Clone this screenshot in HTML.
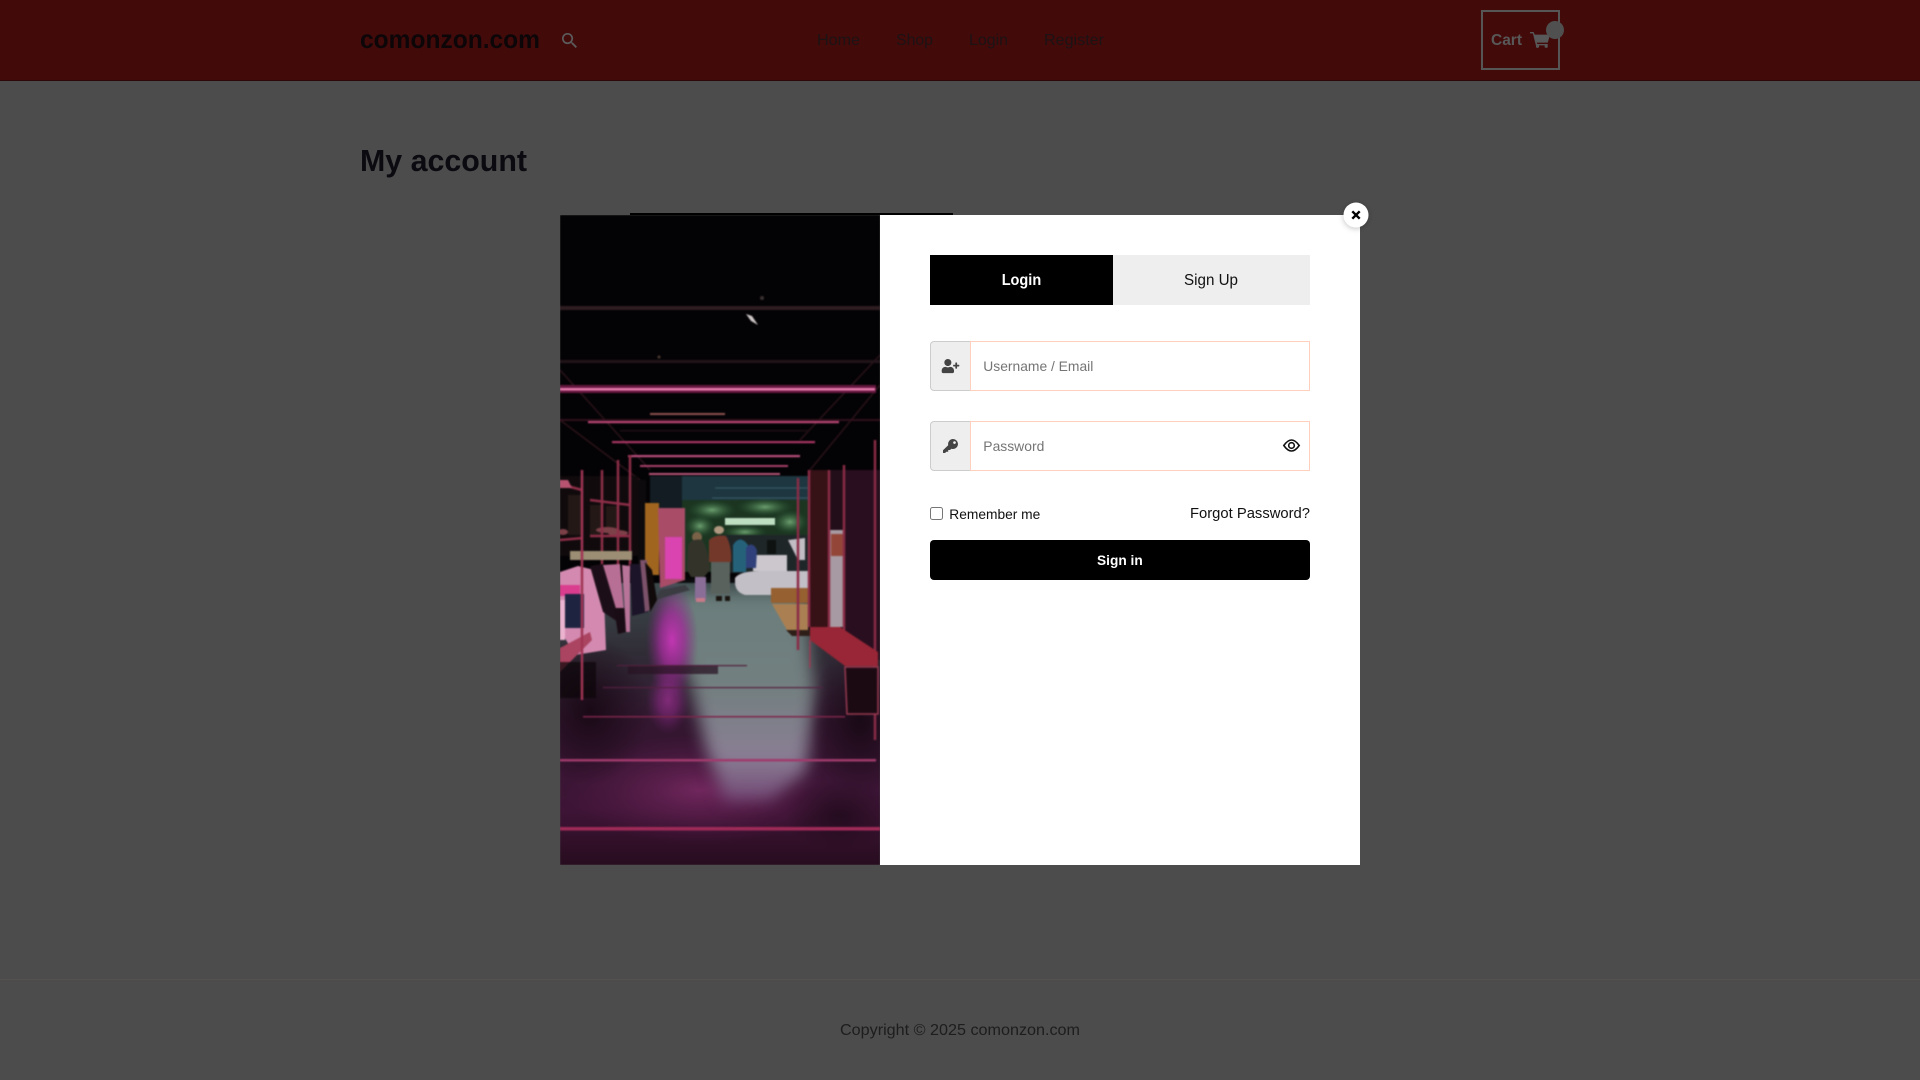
<!DOCTYPE html>
<html lang="en">
<head>
<meta charset="utf-8">
<title>My account – comonzon.com</title>
<style>
html,body{margin:0;padding:0;background:#4c4c4c;overflow:hidden}
svg{display:block;position:absolute;left:0;top:0}
text{font-family:"Liberation Sans",Arial,sans-serif;white-space:pre}
</style>
</head>
<body>
<svg width="1920" height="1080" viewBox="0 0 1920 1080" xmlns="http://www.w3.org/2000/svg">
<defs>
<filter id="all" filterUnits="userSpaceOnUse" x="500" y="160" width="440" height="760" color-interpolation-filters="sRGB"><feGaussianBlur stdDeviation=".8"/></filter>
<filter id="b6" filterUnits="userSpaceOnUse" x="500" y="500" width="440" height="420" color-interpolation-filters="sRGB"><feGaussianBlur stdDeviation="8"/></filter>
<filter id="sh" x="-50%" y="-50%" width="200%" height="200%"><feDropShadow dx="0" dy="1" stdDeviation="3" flood-color="#000" flood-opacity=".25"/></filter>
<clipPath id="imgc"><rect x="560" y="215" width="320" height="650"/></clipPath>
<linearGradient id="floor" x1="0" y1="0" x2="0" y2="1">
<stop offset="0" stop-color="#3c4a4c"/><stop offset=".25" stop-color="#302c36"/><stop offset=".5" stop-color="#331630"/><stop offset=".8" stop-color="#3e1436"/><stop offset="1" stop-color="#270c1e"/>
</linearGradient>
<linearGradient id="gl" gradientUnits="userSpaceOnUse" x1="0" y1="590" x2="0" y2="810">
<stop offset="0" stop-color="#6a7e7c"/><stop offset=".45" stop-color="#737f80"/><stop offset=".75" stop-color="#8a7f94"/><stop offset="1" stop-color="#6e3e70"/>
</linearGradient>
<radialGradient id="pink"><stop offset="0" stop-color="#c236b2"/><stop offset=".45" stop-color="#a02c98" stop-opacity=".8"/><stop offset="1" stop-color="#7a2478" stop-opacity="0"/></radialGradient>
<radialGradient id="plum"><stop offset="0" stop-color="#7a2a64" stop-opacity=".85"/><stop offset="1" stop-color="#5c1c4c" stop-opacity="0"/></radialGradient>
<radialGradient id="dark"><stop offset="0" stop-color="#180814" stop-opacity=".95"/><stop offset="1" stop-color="#180814" stop-opacity="0"/></radialGradient>
<radialGradient id="leaf"><stop offset="0" stop-color="#6da070"/><stop offset="1" stop-color="#2c5a34" stop-opacity="0"/></radialGradient>
</defs>

<!-- page -->
<rect width="1920" height="1080" fill="#4c4c4c"/>
<rect width="1920" height="80" fill="#430a0a"/>
<rect y="80" width="1920" height="1" fill="#2c0808"/>

<text x="360" y="48" font-size="26" font-weight="700" fill="#0d0608" textLength="180" lengthAdjust="spacingAndGlyphs">comonzon.com</text>
<path transform="translate(559.4 30.4) scale(.857)" fill="#5c5c5c" d="M15.5 14h-.79l-.28-.27A6.471 6.471 0 0 0 16 9.5 6.5 6.5 0 1 0 9.5 16c1.61 0 3.09-.59 4.23-1.57l.27.28v.79l5 4.99L20.49 19l-4.99-5zm-6 0C7.01 14 5 11.99 5 9.5S7.01 5 9.5 5 14 7.01 14 9.5 11.99 14 9.5 14z"/>

<g font-size="16" fill="#1c1315">
<text x="817" y="45" textLength="43" lengthAdjust="spacingAndGlyphs">Home</text>
<text x="896" y="45" textLength="37" lengthAdjust="spacingAndGlyphs">Shop</text>
<text x="969" y="45" textLength="39" lengthAdjust="spacingAndGlyphs">Login</text>
<text x="1044" y="45" textLength="60" lengthAdjust="spacingAndGlyphs">Register</text>
</g>

<rect x="1482" y="11" width="77" height="58" fill="none" stroke="#565656" stroke-width="2"/>
<text x="1491" y="45" font-size="16" font-weight="700" fill="#585858" textLength="31" lengthAdjust="spacingAndGlyphs">Cart</text>
<g fill="#585858">
<path d="M1530 32h3.6l1.1 2.6h15.3l-2.2 8h-11l.5 1.4h10.4v1.4h-11.8l-3-11.9-2.9-.1z"/>
<circle cx="1537.5" cy="46.3" r="1.6"/><circle cx="1546.2" cy="46.3" r="1.6"/>
</g>
<circle cx="1555" cy="30" r="9" fill="#505050"/>

<text x="360" y="171" font-size="31" font-weight="700" fill="#0a0a10" textLength="167" lengthAdjust="spacingAndGlyphs">My account</text>

<rect y="979" width="1920" height="1" fill="#565050"/>
<text x="840" y="1035" font-size="16" fill="#1d1d1d" textLength="240" lengthAdjust="spacingAndGlyphs">Copyright © 2025 comonzon.com</text>

<!-- modal -->
<rect x="630" y="213" width="323" height="2" fill="#000"/>
<rect x="880" y="215" width="480" height="650" fill="#fff"/>

<!-- photo -->
<g clip-path="url(#imgc)">
<g filter="url(#all)">
<rect x="560" y="215" width="320" height="650" fill="#030204"/>
<!-- ceiling frame diagonals -->
<g stroke="#2a131a" stroke-width="1.500" fill="none">
<path d="M560 370L650 470M880 355L800 440M880 385L810 470M560 420L640 480"/>
</g>
<!-- rear wall -->
<rect x="672" y="476" width="140" height="30" fill="#1d3640"/>
<g stroke="#385662" stroke-width="1.200" fill="none"><path d="M715 488H810M712 498H808"/></g>
<rect x="650" y="476" width="32" height="40" fill="#121c22"/>
<rect x="682" y="500" width="128" height="72" fill="#1b3521"/>
<ellipse cx="712" cy="510" rx="24" ry="10" fill="url(#leaf)"/>
<ellipse cx="765" cy="507" rx="28" ry="9" fill="url(#leaf)"/>
<ellipse cx="700" cy="526" rx="15" ry="11" fill="url(#leaf)"/>
<ellipse cx="790" cy="522" rx="18" ry="12" fill="url(#leaf)"/>
<ellipse cx="745" cy="532" rx="22" ry="7" fill="url(#leaf)"/>
<rect x="725" y="518" width="50" height="7" fill="#bfdfc2"/>
<rect x="720" y="535" width="90" height="38" fill="#1e2628"/>

<!-- ceiling bars -->
<rect x="560" y="306" width="320" height="4" fill="#2e1c20"/>
<rect x="560" y="360" width="320" height="3" fill="#22151a"/>
<rect x="560" y="385" width="316" height="8" fill="#661840"/>
<rect x="560" y="388" width="315" height="2.500" fill="#e67cae"/>
<rect x="650" y="413" width="75" height="2" fill="#8e5350"/>
<rect x="560" y="419" width="320" height="2" fill="#30101c"/>
<rect x="588" y="421" width="251" height="2.200" fill="#b84574"/>
<rect x="620" y="430" width="190" height="1.500" fill="#1e0e14"/>
<rect x="612" y="441" width="203" height="2.200" fill="#a83664"/>
<rect x="628" y="455" width="172" height="2.200" fill="#b84d7b"/>
<rect x="640" y="465" width="148" height="2" fill="#a8406a"/>
<rect x="649" y="473" width="131" height="2" fill="#b85578"/>
<path d="M746 314l6 2 6 9-7-4z" fill="#cfc8c8"/>
<circle cx="762" cy="298" r="2" fill="#3a3032"/>
<circle cx="659" cy="357" r="1.500" fill="#4a3a30"/>

<!-- floor -->
<rect x="560" y="583" width="320" height="282" fill="url(#floor)"/>
<ellipse cx="700" cy="790" rx="135" ry="55" fill="url(#plum)"/>
<path d="M668 592H802L815 690 806 772 770 800H725L705 745 690 680 672 640z" fill="url(#gl)" filter="url(#b6)"/>
<ellipse cx="672" cy="640" rx="26" ry="58" fill="url(#pink)"/>
<ellipse cx="668" cy="700" rx="22" ry="34" fill="url(#pink)" opacity=".55"/>
<rect x="628" y="665" width="90" height="9" fill="#2a1424" opacity=".75"/>
<ellipse cx="590" cy="710" rx="60" ry="75" fill="url(#dark)"/>
<ellipse cx="860" cy="720" rx="50" ry="75" fill="url(#dark)"/>
<ellipse cx="840" cy="815" rx="55" ry="35" fill="url(#dark)" opacity=".7"/>
<rect x="583" y="716" width="262" height="1.500" fill="#7c264a"/>
<rect x="603" y="687" width="220" height="1.200" fill="#542040"/>
<rect x="617" y="665" width="130" height="1.200" fill="#52203e"/>
<rect x="560" y="759" width="316" height="2.500" fill="#a03a6c"/>
<rect x="560" y="827" width="320" height="3.500" fill="#a02a58"/>

<!-- left wall: orange + pink panel -->
<rect x="638" y="480" width="8" height="105" fill="#0c0a0c"/>
<rect x="645" y="503" width="14" height="72" fill="#a06620"/>
<path d="M658 508H685V580L660 588z" fill="#a84c68"/>
<rect x="665" y="537" width="17" height="42" fill="#d944b0"/>
<path d="M685 585L660 590 655 600 690 590z" fill="#3a3c42"/>

<!-- shelf backs -->
<rect x="560" y="476" width="78" height="80" fill="#100a0c"/>
<g fill="#241816"><rect x="590" y="505" width="12" height="30"/><rect x="606" y="506" width="11" height="28"/><rect x="568" y="495" width="13" height="40"/></g>
<g fill="#7c4048"><ellipse cx="607" cy="530" rx="11" ry="3"/><ellipse cx="618" cy="533" rx="10" ry="3"/><ellipse cx="563" cy="532" rx="5" ry="3"/></g>
<!-- shelf frames -->
<g stroke="#8e2e48" stroke-width="2.500" fill="none">
<path d="M602 470V610"/><path d="M618 460V600"/><path d="M630 455V570"/>
<path d="M560 484L582 490M560 540L583 538M590 500L630 505M590 536L630 536"/>
</g>
<path d="M560 480h8l4 8h-12z" fill="#b85472"/>
<rect x="570" y="551" width="62" height="9" fill="#9c8e74"/>

<!-- clothes -->
<path d="M560 572L578 566 603 572 606 650 575 655 560 630z" fill="#d48ab0"/>
<path d="M560 585H580V596H560z" fill="#da3c8e"/>
<rect x="565" y="594" width="19" height="34" fill="#1e2440"/>
<path d="M560 600H565V640H560z" fill="#ecb4d0"/>
<path d="M590 566L603 564 617 612 618 622 603 612z" fill="#1c0e18"/>
<path d="M603 565L620 564 624 612 617 612z" fill="#b86f95"/>
<path d="M614 608L628 608 626 632 618 634z" fill="#1a0c14"/>
<path d="M622 565L630 566 630 632 626 632z" fill="#b87499"/>
<path d="M630 564H644L648 612 632 616z" fill="#1c1428"/>
<path d="M640 560L647 560 650 610 645 612z" fill="#7c526a"/>
<path d="M645 562L652 570 657 600 650 612z" fill="#100a0a"/>
<path d="M560 648V672L592 640 590 632z" fill="#aa4460"/>
<rect x="560" y="662" width="36" height="36" fill="#0c0608" opacity=".7"/>
<path d="M582 470V700" stroke="#a03454" stroke-width="2.500" fill="none"/>

<!-- table & platform -->
<rect x="753" y="555" width="34" height="16" fill="#cbc7cd"/>
<path d="M735 578Q740 571 760 571H808V595H745Q735 592 735 582z" fill="#c2bfc7"/>
<rect x="771" y="588" width="39" height="15" fill="#966030"/>
<path d="M772 604H810V630H787z" fill="#aa8052"/>
<path d="M786 630H810V636H792z" fill="#2e1e18"/>

<!-- people -->
<ellipse cx="697" cy="537" rx="5" ry="5" fill="#7a6248"/>
<path d="M688 545Q692 538 702 540 708 548 710 570L704 577H691L687 570z" fill="#33332a"/>
<rect x="695" y="577" width="11" height="23" fill="#8a6e98"/>
<path d="M696 598h9v4h-9z" fill="#c87a88"/>
<ellipse cx="719" cy="530" rx="5" ry="4" fill="#b09880"/>
<path d="M709 540Q716 534 726 536 732 546 731 562H709z" fill="#74382a"/>
<rect x="711" y="562" width="19" height="32" fill="#5a625e"/>
<rect x="716" y="596" width="6" height="5" fill="#1a1410"/><rect x="725" y="596" width="5" height="5" fill="#1a1410"/>
<path d="M733 545Q740 534 748 545L746 572H733z" fill="#25627a"/>
<path d="M746 548Q752 540 757 550L756 568H746z" fill="#30407a"/>
<rect x="767" y="540" width="9" height="14" fill="#0e1210"/>
<path d="M788 540L805 538V560H798z" fill="#c2bcc4"/>

<!-- right side -->
<rect x="808" y="470" width="72" height="160" fill="#220e18"/>
<rect x="808" y="470" width="22" height="157" fill="#361116"/>
<rect x="830" y="530" width="14" height="97" fill="#a89aa2"/>
<rect x="831" y="534" width="12" height="22" fill="#934638"/>
<rect x="844" y="470" width="36" height="190" fill="#280e1e"/>
<g stroke="#8a2c46" stroke-width="2.500" fill="none">
<path d="M798 478V650"/><path d="M809 470V627"/><path d="M829 470V627"/><path d="M844 465V640"/><path d="M875 440V740"/>
</g>
<path d="M810 627H840L878 652V666H845L810 640z" fill="#982636"/>
<path d="M845 667H878V714H847z" fill="#1c0a12" stroke="#983a52" stroke-width="1.500"/>
<path d="M810 640V668" stroke="#983a52" stroke-width="1.500" fill="none"/>
</g>
</g>

<!-- close -->
<circle cx="1356" cy="215" r="12.5" fill="#fff" filter="url(#sh)"/>
<path d="M1352.3 211.3l7.4 7.4M1359.7 211.3l-7.4 7.4" stroke="#000" stroke-width="2.4" fill="none"/>

<!-- tabs -->
<rect x="930" y="255" width="183" height="50" fill="#000"/>
<rect x="1113" y="255" width="197" height="50" fill="#eee"/>
<text x="1001.7" y="285" font-size="16" font-weight="700" fill="#fff" textLength="39.5" lengthAdjust="spacingAndGlyphs">Login</text>
<text x="1184" y="285" font-size="16" fill="#111" textLength="54" lengthAdjust="spacingAndGlyphs">Sign Up</text>

<!-- username -->
<path d="M970.500 341.500H934a3.500 3.500 0 0 0-3.500 3.500v42a3.500 3.500 0 0 0 3.500 3.500h36.500z" fill="#eee" stroke="#ccc"/>
<rect x="970.500" y="341.500" width="339" height="49" fill="#fff" stroke="#ffd0bd"/>
<path transform="translate(941.7 359) scale(.0275)" fill="#444" d="M624 208h-64v-64c0-8.800-7.200-16-16-16h-32c-8.800 0-16 7.200-16 16v64h-64c-8.800 0-16 7.200-16 16v32c0 8.800 7.200 16 16 16h64v64c0 8.800 7.200 16 16 16h32c8.800 0 16-7.200 16-16v-64h64c8.800 0 16-7.200 16-16v-32c0-8.800-7.200-16-16-16zm-400 48c70.700 0 128-57.300 128-128S294.700 0 224 0 96 57.300 96 128s57.300 128 128 128zm89.600 32h-16.700c-22.200 10.200-46.900 16-72.900 16s-50.600-5.800-72.900-16h-16.700C60.200 288 0 348.200 0 422.400V464c0 26.500 21.500 48 48 48h352c26.500 0 48-21.500 48-48v-41.600c0-74.200-60.200-134.400-134.400-134.400z"/>
<text x="983.300" y="371" font-size="14" fill="#757575" textLength="110" lengthAdjust="spacingAndGlyphs">Username / Email</text>

<!-- password -->
<path d="M970.500 421.500H934a3.500 3.500 0 0 0-3.500 3.500v42a3.500 3.500 0 0 0 3.500 3.500h36.500z" fill="#eee" stroke="#ccc"/>
<rect x="970.500" y="421.500" width="339" height="49" fill="#fff" stroke="#ffd0bd"/>
<path fill="#444" fill-rule="evenodd" d="M953 439a5 5 0 0 1 5 5 5 5 0 0 1-6.600 4.700L950 450h-1.800v1.800h-1.800l-1.400 1.200H943v-2.700l5.200-5.100A5 5 0 0 1 953 439zm1.500 2.200a1.400 1.400 0 1 0 .01 0z"/>
<text x="983.300" y="451" font-size="14" fill="#757575" textLength="61" lengthAdjust="spacingAndGlyphs">Password</text>
<path d="M1283.800 445.500Q1291.500 434.500 1299.200 445.500Q1291.500 456.500 1283.800 445.500Z" fill="none" stroke="#111" stroke-width="1.600"/>
<circle cx="1291.500" cy="445.500" r="2.800" fill="none" stroke="#111" stroke-width="1.600"/>

<!-- options -->
<rect x="930.500" y="507.500" width="12" height="12" rx="2" fill="#fff" stroke="#767676"/>
<text x="949.300" y="519" font-size="14" fill="#111" textLength="91" lengthAdjust="spacingAndGlyphs">Remember me</text>
<text x="1190" y="518" font-size="14.500" fill="#111" textLength="120" lengthAdjust="spacingAndGlyphs">Forgot Password?</text>

<!-- sign in -->
<rect x="930" y="540" width="380" height="40" rx="4" fill="#000"/>
<text x="1097" y="565" font-size="14" font-weight="700" fill="#fff" textLength="45.700" lengthAdjust="spacingAndGlyphs">Sign in</text>
</svg>
</body>
</html>
